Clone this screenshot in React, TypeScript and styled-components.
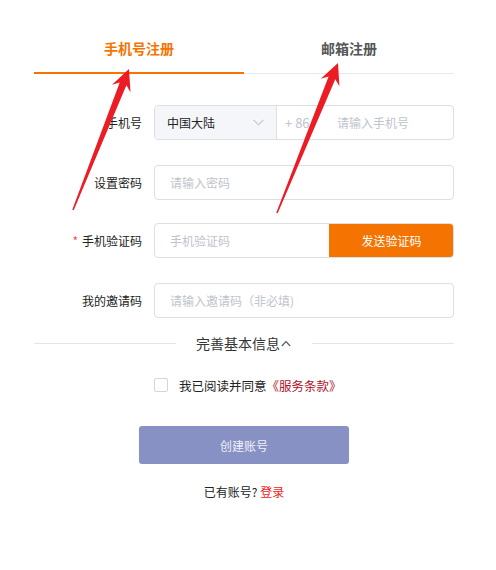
import React from "react";
import styled, { createGlobalStyle } from "styled-components";

const GlobalStyle = createGlobalStyle`
  html, body { margin: 0; padding: 0; background: #fff; }
  body {
    font-family: "Noto Sans CJK SC", "Noto Sans", "Liberation Sans", sans-serif;
    color: #222;
    -webkit-font-smoothing: antialiased;
  }
  * { box-sizing: border-box; }
`;

const ORANGE = "#f57300";
const BORDER = "#dcdfe6";
const PLACEHOLDER = "#c0c4cc";

const Page = styled.div`
  position: relative;
  width: 496px;
  height: 570px;
  overflow: hidden;
`;

const Panel = styled.div`
  width: 420px;
  margin-left: 34px;
  padding-top: 26px;
  display: flex;
  flex-direction: column;
`;

const Tabs = styled.div`
  display: flex;
  border-bottom: 1px solid #e8e9ef;
`;

const Tab = styled.div<{ $active?: boolean }>`
  flex: 1;
  height: 48px;
  margin-bottom: -1px;
  display: flex;
  align-items: center;
  justify-content: center;
  padding-bottom: 2px;
  font-size: 14px;
  font-weight: 700;
  color: ${(p) => (p.$active ? ORANGE : "#555")};
  border-bottom: 2px solid ${(p) => (p.$active ? ORANGE : "transparent")};
`;

const Form = styled.div`
  margin-top: 31px;
  display: flex;
  flex-direction: column;
`;

const Row = styled.div<{ $top?: number }>`
  display: flex;
  align-items: center;
  height: 35px;
  margin-top: ${(p) => p.$top ?? 0}px;
`;

const Label = styled.div`
  width: 120px;
  padding-right: 12px;
  text-align: right;
  font-size: 12px;
  color: #222;
  white-space: nowrap;
`;

const Required = styled.span`
  color: #f05050;
  margin-right: 4px;
`;

const Box = styled.div`
  flex: 1;
  height: 35px;
  display: flex;
  align-items: stretch;
  border: 1px solid ${BORDER};
  border-radius: 4px;
  overflow: hidden;
  background: #fff;
`;

const Field = styled.input<{ $pad?: number }>`
  flex: 1;
  min-width: 0;
  border: none;
  outline: none;
  background: transparent;
  padding: 0 0 0 ${(p) => p.$pad ?? 15}px;
  font-family: inherit;
  font-size: 12px;
  color: #222;
  &::placeholder { color: ${PLACEHOLDER}; }
`;

const Select = styled.div`
  width: 122px;
  flex: none;
  display: flex;
  align-items: center;
  justify-content: space-between;
  padding: 0 12px 0 12px;
  background: #f5f6fa;
  border-right: 1px solid ${BORDER};
  font-size: 12px;
  color: #222;
`;

const Prefix = styled.div`
  width: 50px;
  flex: none;
  display: flex;
  align-items: center;
  padding-left: 8px;
  font-size: 13px;
  color: ${PLACEHOLDER};
`;

const SendButton = styled.button`
  width: 125px;
  flex: none;
  margin: -1px -1px -1px 0;
  border: none;
  background: ${ORANGE};
  color: #fff;
  font-family: inherit;
  font-size: 12px;
  cursor: pointer;
`;

const Divider = styled.div`
  margin-top: 15px;
  height: 20px;
  display: flex;
  align-items: center;
  &::before, &::after {
    content: "";
    flex: 1;
    height: 1px;
    background: #e3e4ea;
  }
`;

const DividerText = styled.div`
  padding: 0 21px 0 20px;
  font-size: 14px;
  color: #333;
  display: flex;
  align-items: center;
  gap: 1px;
`;

const Agree = styled.label`
  margin-top: 22px;
  height: 20px;
  padding-left: 120px;
  display: flex;
  align-items: center;
  font-size: 12.5px;
  color: #222;
`;

const Check = styled.span`
  width: 14px;
  height: 14px;
  border: 1px solid #d4d6de;
  border-radius: 2px;
  background: #fff;
  margin-right: 11px;
`;

const Terms = styled.span`
  color: #b0102a;
`;

const Submit = styled.button`
  align-self: center;
  margin-top: 31px;
  width: 210px;
  height: 38px;
  border: none;
  border-radius: 3px;
  background: #8891c4;
  color: #eef0f8;
  font-family: inherit;
  font-size: 12px;
`;

const LoginLine = styled.div`
  margin-top: 20px;
  text-align: center;
  font-size: 12px;
  color: #222;
  line-height: 16px;
`;

const LoginLink = styled.span`
  color: #ee1c1c;
`;

const Overlay = styled.svg`
  position: absolute;
  left: 0;
  top: 0;
  pointer-events: none;
`;

function arrowPoints(tip: [number, number], tail: [number, number]) {
  const dx = tip[0] - tail[0];
  const dy = tip[1] - tail[1];
  const len = Math.hypot(dx, dy);
  const ux = dx / len;
  const uy = dy / len;
  const nx = -uy;
  const ny = ux;
  const at = (d: number, w: number): string =>
    `${(tip[0] - ux * d + nx * w).toFixed(1)},${(tip[1] - uy * d + ny * w).toFixed(1)}`;
  return [
    at(0, 0),
    at(21, 10),
    at(16, 3.6),
    at(len, 0.8),
    at(len, -0.8),
    at(16, -3.6),
    at(21, -10),
  ].join(" ");
}

const Chevron = () => (
  <svg width="11" height="7" viewBox="0 0 11 7">
    <path d="M0.5 0.8 L5.5 5.8 L10.5 0.8" fill="none" stroke="#c0c4cc" strokeWidth="1.1" />
  </svg>
);

const Caret = () => (
  <svg width="10" height="7" viewBox="0 0 10 7">
    <path d="M0.8 6 L5 1.5 L9.2 6" fill="none" stroke="#555" strokeWidth="1.1" />
  </svg>
);

export default function App() {
  return (
    <Page>
      <GlobalStyle />
      <Panel>
        <Tabs>
          <Tab $active>手机号注册</Tab>
          <Tab>邮箱注册</Tab>
        </Tabs>
        <Form>
          <Row>
            <Label>手机号</Label>
            <Box>
              <Select>
                <span>中国大陆</span>
                <Chevron />
              </Select>
              <Prefix>+ 86</Prefix>
              <Field $pad={10} placeholder="请输入手机号" />
            </Box>
          </Row>
          <Row $top={25}>
            <Label>设置密码</Label>
            <Box>
              <Field type="password" placeholder="请输入密码" />
            </Box>
          </Row>
          <Row $top={23}>
            <Label>
              <Required>*</Required>手机验证码
            </Label>
            <Box>
              <Field placeholder="手机验证码" />
              <SendButton>发送验证码</SendButton>
            </Box>
          </Row>
          <Row $top={25}>
            <Label>我的邀请码</Label>
            <Box>
              <Field placeholder="请输入邀请码（非必填)" />
            </Box>
          </Row>
        </Form>
        <Divider>
          <DividerText>
            完善基本信息
            <Caret />
          </DividerText>
        </Divider>
        <Agree>
          <Check />
          我已阅读并同意<Terms>《服务条款》</Terms>
        </Agree>
        <Submit>创建账号</Submit>
        <LoginLine>
          已有账号? <LoginLink>登录</LoginLink>
        </LoginLine>
      </Panel>
      <Overlay width="496" height="570" viewBox="0 0 496 570">
        <polygon points={arrowPoints([129, 69], [73, 210])} fill="#ec1c24" />
        <polygon points={arrowPoints([338, 63], [277, 213])} fill="#ec1c24" />
      </Overlay>
    </Page>
  );
}
